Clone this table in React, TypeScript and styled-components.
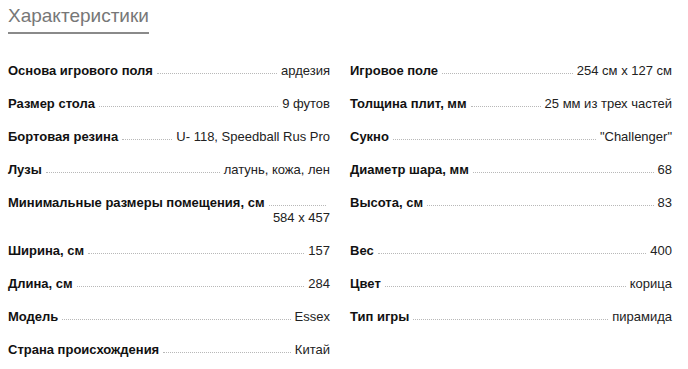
import React from 'react';
import styled, { createGlobalStyle } from 'styled-components';

const GlobalStyle = createGlobalStyle`
  body {
    margin: 0;
    background: #fff;
    font-family: "Liberation Sans", Arial, sans-serif;
  }
`;

const Page = styled.div`
  padding: 0 8px;
  width: 664px;
`;

const Title = styled.h2`
  display: inline-block;
  margin: 5px 0 0;
  padding-bottom: 5px;
  font-size: 19px;
  font-weight: normal;
  line-height: 22px;
  color: #777;
  border-bottom: 2px solid #8a8a8a;
`;

const Specs = styled.div`
  display: grid;
  grid-template-columns: 322px 322px;
  column-gap: 20px;
  row-gap: 18px;
  margin-top: 29px;
`;

const Item = styled.div`
  display: flex;
  flex-wrap: wrap;
  align-items: baseline;
  align-self: start;
  font-size: 13px;
  line-height: 15px;
`;

const Label = styled.span`
  font-weight: bold;
  color: #111;
`;

const Leader = styled.span<{ $min?: number }>`
  flex: 1;
  min-width: ${({ $min }) => $min ?? 20}px;
  margin: 0 4px;
  border-bottom: 1px dotted #b8b8b8;
  transform: translateY(-1px);
`;

const Value = styled.span`
  margin-left: auto;
  color: #222;
`;

type Spec = { label: string; value: string };

const specs: Spec[] = [
  { label: 'Основа игрового поля', value: 'ардезия' },
  { label: 'Игровое поле', value: '254 см x 127 см' },
  { label: 'Размер стола', value: '9 футов' },
  { label: 'Толщина плит, мм', value: '25 мм из трех частей' },
  { label: 'Бортовая резина', value: 'U- 118, Speedball Rus Pro' },
  { label: 'Сукно', value: '"Challenger"' },
  { label: 'Лузы', value: 'латунь, кожа, лен' },
  { label: 'Диаметр шара, мм', value: '68' },
  { label: 'Минимальные размеры помещения, см', value: '584 x 457' },
  { label: 'Высота, см', value: '83' },
  { label: 'Ширина, см', value: '157' },
  { label: 'Вес', value: '400' },
  { label: 'Длина, см', value: '284' },
  { label: 'Цвет', value: 'корица' },
  { label: 'Модель', value: 'Essex' },
  { label: 'Тип игры', value: 'пирамида' },
  { label: 'Страна происхождения', value: 'Китай' },
];

export default function App() {
  return (
    <>
      <GlobalStyle />
      <Page>
        <Title>Характеристики</Title>
        <Specs>
          {specs.map((s) => (
            <Item key={s.label}>
              <Label>{s.label}</Label>
              <Leader />
              <Value>{s.value}</Value>
            </Item>
          ))}
        </Specs>
      </Page>
    </>
  );
}
